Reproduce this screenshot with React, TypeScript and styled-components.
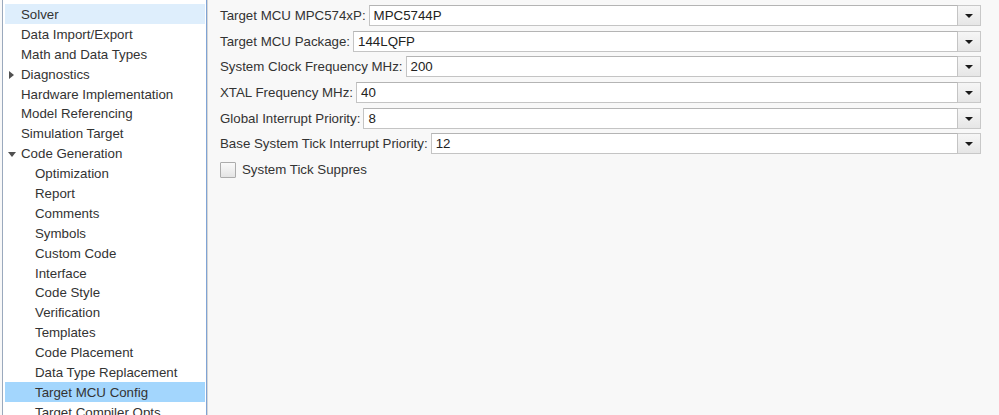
import React from "react";
import styled, { createGlobalStyle } from "styled-components";

interface TreeItem {
  label: string;
  level: number;
  arrow?: "right" | "down";
  selected?: "soft" | "strong";
}

const TREE: TreeItem[] = [
  { label: "Solver", level: 0, selected: "soft" },
  { label: "Data Import/Export", level: 0 },
  { label: "Math and Data Types", level: 0 },
  { label: "Diagnostics", level: 0, arrow: "right" },
  { label: "Hardware Implementation", level: 0 },
  { label: "Model Referencing", level: 0 },
  { label: "Simulation Target", level: 0 },
  { label: "Code Generation", level: 0, arrow: "down" },
  { label: "Optimization", level: 1 },
  { label: "Report", level: 1 },
  { label: "Comments", level: 1 },
  { label: "Symbols", level: 1 },
  { label: "Custom Code", level: 1 },
  { label: "Interface", level: 1 },
  { label: "Code Style", level: 1 },
  { label: "Verification", level: 1 },
  { label: "Templates", level: 1 },
  { label: "Code Placement", level: 1 },
  { label: "Data Type Replacement", level: 1 },
  { label: "Target MCU Config", level: 1, selected: "strong" },
  { label: "Target Compiler Opts", level: 1 },
];

const FIELDS = [
  { label: "Target MCU MPC574xP:", value: "MPC5744P" },
  { label: "Target MCU Package:", value: "144LQFP" },
  { label: "System Clock Frequency MHz:", value: "200" },
  { label: "XTAL Frequency MHz:", value: "40" },
  { label: "Global Interrupt Priority:", value: "8" },
  { label: "Base System Tick Interrupt Priority:", value: "12" },
];

const GlobalStyle = createGlobalStyle`
  html, body {
    margin: 0;
    padding: 0;
    background: #f8f8f8;
  }
  body {
    font-family: "Liberation Sans", Arial, sans-serif;
    font-size: 13.3px;
    color: #333333;
  }
`;

const Page = styled.div`
  display: flex;
  width: 999px;
  height: 415px;
  overflow: hidden;
  background: #f8f8f8;
`;

const TreePanel = styled.div`
  margin-left: 2px;
  width: 200px;
  flex-shrink: 0;
  background: #ffffff;
  border-left: 1px solid #9aa9bd;
  border-right: 1px solid #7fa3d4;
  padding: 4px 1px 0 2px;
  box-shadow: 1px 0 0 #d6d6d6;
`;

const TreeRow = styled.div<{ $level: number; $selected?: "soft" | "strong" }>`
  position: relative;
  height: 19.9px;
  line-height: 22px;
  padding-left: ${(p) => (p.$level === 0 ? 16 : 30)}px;
  white-space: nowrap;
  background: ${(p) =>
    p.$selected === "strong"
      ? "#a3d6fd"
      : p.$selected === "soft"
      ? "#deeefc"
      : "transparent"};
`;

const Arrow = styled.span<{ $dir: "right" | "down" }>`
  position: absolute;
  left: 4px;
  top: 55%;
  width: 0;
  height: 0;
  ${(p) =>
    p.$dir === "right"
      ? `
    margin-top: -4px;
    border-top: 4px solid transparent;
    border-bottom: 4px solid transparent;
    border-left: 5px solid #505050;
  `
      : `
    left: 3px;
    margin-top: -2px;
    border-left: 4px solid transparent;
    border-right: 4px solid transparent;
    border-top: 5px solid #505050;
  `}
`;

const Form = styled.div`
  flex: 1;
  display: flex;
  flex-direction: column;
  gap: 4.7px;
  padding: 5px 18px 0 13px;
`;

const FieldRow = styled.div`
  display: flex;
  align-items: center;
  height: 21px;
`;

const Label = styled.span`
  white-space: nowrap;
  margin-right: 3px;
`;

const Combo = styled.div`
  flex: 1;
  display: flex;
  height: 21px;
`;

const ComboValue = styled.div`
  flex: 1;
  background: #ffffff;
  border: 1px solid #c4c4c4;
  border-top-color: #b4b4b4;
  padding-left: 4px;
  line-height: 19px;
  color: #222222;
`;

const ComboButton = styled.div`
  width: 22px;
  display: flex;
  align-items: center;
  justify-content: center;
  border: 1px solid #c8c8c8;
  border-left: none;
  background: linear-gradient(#f6f6f6, #e6e6e6);
`;

const CaretDown = styled.span`
  width: 0;
  height: 0;
  border-left: 4px solid transparent;
  border-right: 4px solid transparent;
  border-top: 4px solid #1a1a1a;
  margin-top: 1px;
`;

const CheckRow = styled.label`
  display: flex;
  align-items: center;
  gap: 6px;
  height: 21px;
`;

const CheckBox = styled.span`
  width: 14px;
  height: 14px;
  border: 1px solid #acacac;
  border-radius: 1px;
  background: linear-gradient(#fafafa, #e4e4e4);
`;

export default function App() {
  return (
    <>
      <GlobalStyle />
      <Page>
        <TreePanel>
          {TREE.map((item) => (
            <TreeRow key={item.label} $level={item.level} $selected={item.selected}>
              {item.arrow && <Arrow $dir={item.arrow} />}
              {item.label}
            </TreeRow>
          ))}
        </TreePanel>
        <Form>
          {FIELDS.map((f) => (
            <FieldRow key={f.label}>
              <Label>{f.label}</Label>
              <Combo>
                <ComboValue>{f.value}</ComboValue>
                <ComboButton>
                  <CaretDown />
                </ComboButton>
              </Combo>
            </FieldRow>
          ))}
          <CheckRow>
            <CheckBox />
            System Tick Suppres
          </CheckRow>
        </Form>
      </Page>
    </>
  );
}
